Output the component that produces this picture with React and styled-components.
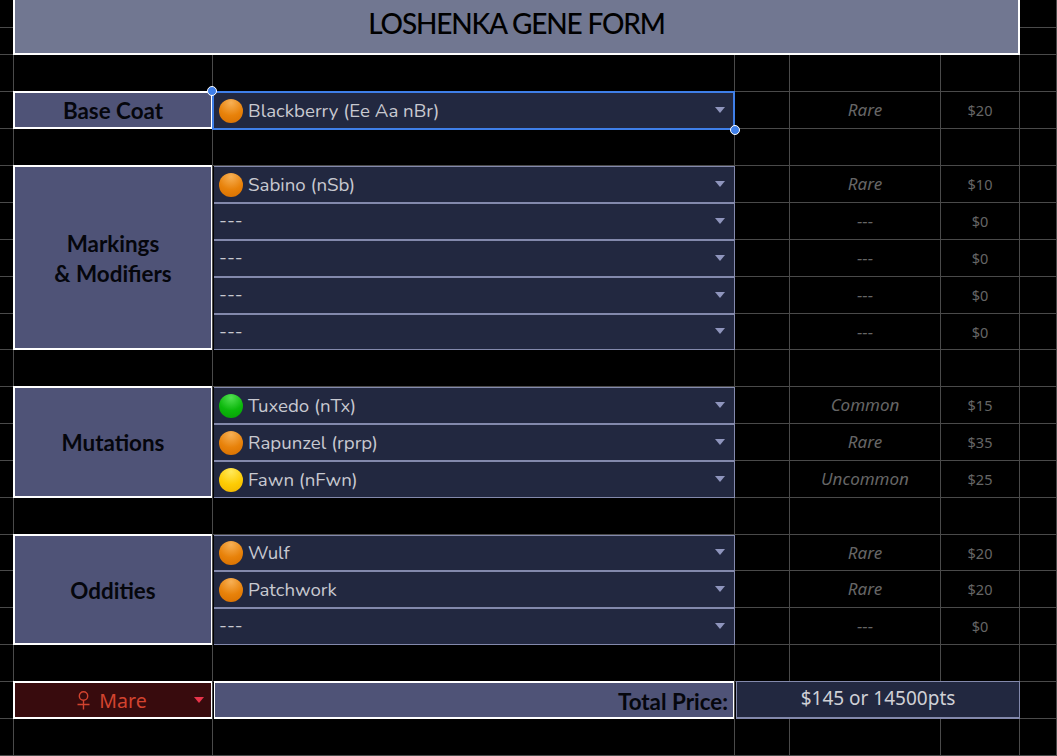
import React from "react";
import styled, { createGlobalStyle } from "styled-components";

const GlobalStyle = createGlobalStyle`
  html, body {
    margin: 0;
    padding: 0;
    background: #000;
    overflow: hidden;
  }
`;

const rowHeights = [28, 27, 37, 37, 37, 37, 37, 37, 37, 36, 37, 37, 37, 37, 37, 36, 37, 37, 37, 37, 37];

const Sheet = styled.div`
  display: grid;
  grid-template-columns: 14px 199px 522px 55px 151px 79px 37px;
  grid-template-rows: ${rowHeights.map((h) => h + "px").join(" ")};
  width: 1057px;
  height: 756px;
  overflow: hidden;
  background: #000;
  font-family: "Noto Sans", sans-serif;
`;

const Cell = styled.div`
  box-sizing: border-box;
  border-right: 1px solid #4a4a4a;
  border-bottom: 1px solid #4a4a4a;
  display: flex;
  align-items: center;
  justify-content: center;
  min-width: 0;
  grid-column: ${(p) => p.$col} / span ${(p) => p.$span || 1};
  grid-row: ${(p) => p.$row} / span ${(p) => p.$rows || 1};
`;

const Title = styled(Cell)`
  background: #717791;
  border: 2px solid #fff;
  border-top: 0;
  margin-left: -1px;
  padding-bottom: 7px;
  color: #000;
  font-family: "Lato", sans-serif;
  font-size: 28px;
  font-weight: 500;
  letter-spacing: -1.15px;
`;

const Label = styled(Cell)`
  background: #4f5377;
  border: solid #fff;
  border-width: 2px 1px 2px 2px;
  margin: -1px 1px 0 -1px;
  box-shadow: 1px 0 0 #4a4a4a;
  padding-top: 2px;
  color: #05060c;
  font-family: "Lato", sans-serif;
  font-size: 22.4px;
  font-weight: 700;
  line-height: 30px;
  text-align: center;
`;

const TotalLabel = styled(Label)`
  margin: -1px 1px 0 1px;
  border-width: 2px 1px 2px 1px;
  justify-content: flex-end;
  padding-right: 5px;
  padding-top: 3px;
`;

const Picker = styled(Cell)`
  position: relative;
  background: #222840;
  border: 1px solid #8389ac;
  border-width: 1px 1px 1px 0;
  margin-left: 1px;
  justify-content: flex-start;
  padding: 0 6px 0 5px;
  color: #c8c9d0;
  font-family: "Nunito", "Noto Sans", sans-serif;
  font-size: 18.7px;
  gap: 5px;
`;

const Selected = styled(Picker)`
  border: 2px solid #3f7fe8;
  margin: -1px 0 -1px -1px;
  padding-left: 5px;
  padding-right: 5px;
`;

const Dot = styled.span`
  width: 24px;
  height: 24px;
  border-radius: 50%;
  flex: none;
  background: radial-gradient(circle at 50% 15%, ${(p) => p.$light} 0%, ${(p) => p.$color} 55%, ${(p) => p.$dark} 100%);
`;

const Name = styled.span`
  flex: 1;
  padding-bottom: ${(p) => (p.$empty ? "3px" : "0")};
`;

const Caret = styled.span`
  width: 0;
  height: 0;
  border-left: 5px solid transparent;
  border-right: 5px solid transparent;
  border-top: 6px solid ${(p) => p.$color || "#8f95bd"};
  margin: 0 3px 2px 0;
  flex: none;
`;

const Handle = styled.span`
  position: absolute;
  width: 8px;
  height: 8px;
  border: 1.5px solid #fff;
  border-radius: 50%;
  background: #3f7fe8;
  z-index: 2;
  ${(p) => (p.$start ? "top: -7px; left: -7px;" : "bottom: -7px; right: -7px;")}
`;

const Rarity = styled(Cell)`
  color: #666;
  font-style: italic;
  font-size: 17px;
  padding-bottom: 1px;
`;

const Cost = styled(Cell)`
  color: #666;
  font-size: 14.5px;
`;

const Sex = styled(Cell)`
  position: relative;
  background: #380b0d;
  border: solid #fff;
  border-width: 2px 1px 2px 2px;
  margin: -1px 1px 0 -1px;
  box-shadow: 1px 0 0 #4a4a4a;
  color: #d2432f;
  font-family: "Noto Sans", sans-serif;
  font-size: 19.5px;
  gap: 8px;
  padding-right: 3px;
`;

const SexCaret = styled.span`
  position: absolute;
  right: 7px;
  top: 14px;
  width: 0;
  height: 0;
  border-left: 5px solid transparent;
  border-right: 5px solid transparent;
  border-top: 6px solid #e8344a;
`;

const Total = styled(Cell)`
  background: #222840;
  border: solid #8389ac;
  border-width: 1px 1px 2px 1px;
  margin: -1px 0 0 1px;
  color: #cfd0d6;
  font-size: 19px;
  padding-bottom: 4px;
`;

const dots = {
  rare: { $color: "#e8820a", $light: "#f7b055", $dark: "#d66e00" },
  common: { $color: "#0bb80b", $light: "#52e052", $dark: "#069c06" },
  uncommon: { $color: "#fdcc04", $light: "#ffe95a", $dark: "#f0b400" },
};

const groups = [
  {
    label: ["Base Coat"],
    row: 4,
    items: [{ name: "Blackberry (Ee Aa nBr)", rarity: "Rare", cost: "$20", dot: "rare", selected: true }],
  },
  {
    label: ["Markings", "& Modifiers"],
    row: 6,
    items: [
      { name: "Sabino (nSb)", rarity: "Rare", cost: "$10", dot: "rare" },
      { name: "---", rarity: "---", cost: "$0" },
      { name: "---", rarity: "---", cost: "$0" },
      { name: "---", rarity: "---", cost: "$0" },
      { name: "---", rarity: "---", cost: "$0" },
    ],
  },
  {
    label: ["Mutations"],
    row: 12,
    items: [
      { name: "Tuxedo (nTx)", rarity: "Common", cost: "$15", dot: "common" },
      { name: "Rapunzel (rprp)", rarity: "Rare", cost: "$35", dot: "rare" },
      { name: "Fawn (nFwn)", rarity: "Uncommon", cost: "$25", dot: "uncommon" },
    ],
  },
  {
    label: ["Oddities"],
    row: 16,
    items: [
      { name: "Wulf", rarity: "Rare", cost: "$20", dot: "rare" },
      { name: "Patchwork", rarity: "Rare", cost: "$20", dot: "rare" },
      { name: "---", rarity: "---", cost: "$0" },
    ],
  },
];

const SEX_ROW = 20;

// every cell the named parts don't cover, so the sheet's grid lines still show
const blankCells = () => {
  const taken = new Set();
  const mark = (c, r) => taken.add(c + ":" + r);
  [2, 3, 4, 5, 6].forEach((c) => [1, 2, SEX_ROW].forEach((r) => mark(c, r)));
  groups.forEach((g) =>
    g.items.forEach((_, i) => [2, 3, 5, 6].forEach((c) => mark(c, g.row + i)))
  );
  const out = [];
  for (let r = 1; r <= rowHeights.length; r++) {
    for (let c = 1; c <= 7; c++) {
      if (!taken.has(c + ":" + r)) out.push(<Cell key={c + "-" + r} $col={c} $row={r} />);
    }
  }
  return out;
};

const VenusIcon = () => (
  <svg width="15" height="20" viewBox="0 0 15 20" fill="none" stroke="currentColor" strokeWidth="1.4">
    <circle cx="7.5" cy="6" r="4.2" />
    <path d="M7.5 10.2V19.5M1.5 14.5H13.5" />
  </svg>
);

const App = () => (
  <>
    <GlobalStyle />
    <Sheet>
      {blankCells()}
      <Title $col={2} $span={5} $row={1} $rows={2}>LOSHENKA GENE FORM</Title>
      {groups.map((g) => (
        <React.Fragment key={g.row}>
          <Label $col={2} $row={g.row} $rows={g.items.length}>
            <span>
              {g.label.map((l) => (
                <div key={l}>{l}</div>
              ))}
            </span>
          </Label>
          {g.items.map((item, i) => {
            const Box = item.selected ? Selected : Picker;
            return (
              <React.Fragment key={i}>
                <Box $col={3} $row={g.row + i}>
                  {item.dot && <Dot {...dots[item.dot]} />}
                  <Name $empty={!item.dot}>{item.name}</Name>
                  <Caret />
                  {item.selected && <Handle $start />}
                  {item.selected && <Handle />}
                </Box>
                <Rarity $col={5} $row={g.row + i}>{item.rarity}</Rarity>
                <Cost $col={6} $row={g.row + i}>{item.cost}</Cost>
              </React.Fragment>
            );
          })}
        </React.Fragment>
      ))}
      <Sex $col={2} $row={SEX_ROW}>
        <VenusIcon />
        <span>Mare</span>
        <SexCaret />
      </Sex>
      <TotalLabel $col={3} $row={SEX_ROW}>Total Price:</TotalLabel>
      <Total $col={4} $span={3} $row={SEX_ROW}>$145 or 14500pts</Total>
    </Sheet>
  </>
);

export default App;
